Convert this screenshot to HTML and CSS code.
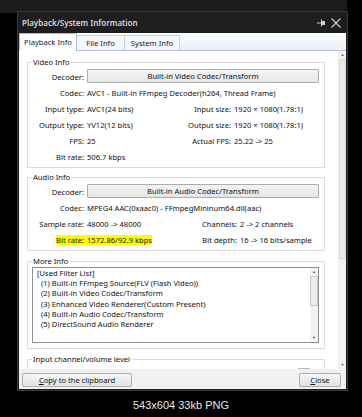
FILE: index.html
```html
<!DOCTYPE html>
<html>
<head>
<meta charset="utf-8">
<link rel="stylesheet" href="styles.css">
</head>
<body>
<div class="screen">
  <div class="window">
    <div class="titlebar">
      <span class="title">Playback/System Information</span>
      <svg class="pin" width="10" height="8" viewBox="0 0 10 8"><path d="M0 4H4" stroke="#cfcfcf" stroke-width="1"/><rect x="4" y="2" width="4" height="4" fill="#cfcfcf"/><path d="M4.5 0.5V7.5" stroke="#cfcfcf" stroke-width="1"/></svg>
      <svg class="close" width="10" height="10" viewBox="0 0 10 10"><path d="M0.5 0.5L9.5 9.5M9.5 0.5L0.5 9.5" stroke="#d0d0d0" stroke-width="1.1"/></svg>
    </div>
    <div class="client">
      <div class="tabs">
        <div class="tab active">Playback Info</div>
        <div class="tab t-file">File Info</div>
        <div class="tab t-sys">System Info</div>
      </div>
      <div class="panel">
        <div class="scroll">
          <fieldset class="group g-video">
            <legend>Video Info</legend>
            <div class="grid">
              <div class="lbl">Decoder:</div>
              <div class="span"><div class="dbtn">Built-in Video Codec/Transform</div></div>
              <div class="lbl">Codec:</div>
              <div class="span">AVC1 - Built-in FFmpeg Decoder(h264, Thread Frame)</div>
              <div class="lbl">Input type:</div>
              <div>AVC1(24 bits)</div>
              <div class="lbl">Input size:</div>
              <div>1920 × 1080(1.78:1)</div>
              <div class="lbl">Output type:</div>
              <div>YV12(12 bits)</div>
              <div class="lbl">Output size:</div>
              <div>1920 × 1080(1.78:1)</div>
              <div class="lbl">FPS:</div>
              <div>25</div>
              <div class="lbl">Actual FPS:</div>
              <div>25.22 -&gt; 25</div>
              <div class="lbl">Bit rate:</div>
              <div>506.7 kbps</div>
            </div>
          </fieldset>
          <fieldset class="group g-audio">
            <legend>Audio Info</legend>
            <div class="grid audio">
              <div class="lbl">Decoder:</div>
              <div class="span"><div class="dbtn">Built-in Audio Codec/Transform</div></div>
              <div class="lbl">Codec:</div>
              <div class="span">MPEG4 AAC(0xaac0) - FFmpegMininum64.dll(aac)</div>
              <div class="lbl">Sample rate:</div>
              <div>48000 -&gt; 48000</div>
              <div class="lbl">Channels:</div>
              <div>2 -&gt; 2 channels</div>
              <div class="lbl"><span class="hl hl-l">Bit rate:</span></div>
              <div><span class="hl">1572.86/92.9 kbps</span></div>
              <div class="lbl">Bit depth:</div>
              <div>16 -&gt; 16 bits/sample</div>
            </div>
          </fieldset>
          <fieldset class="group g-more">
            <legend>More Info</legend>
            <div class="listbox">
              <div class="lines">
                <div>[Used Filter List]</div>
                <div class="item">(1) Built-in FFmpeg Source(FLV (Flash Video))</div>
                <div class="item">(2) Built-in Video Codec/Transform</div>
                <div class="item">(3) Enhanced Video Renderer(Custom Present)</div>
                <div class="item">(4) Built-in Audio Codec/Transform</div>
                <div class="item">(5) DirectSound Audio Renderer</div>
              </div>
              <div class="sbar small">
                <div class="arrow">▲</div>
                <div class="track"><div class="thumb"></div></div>
                <div class="arrow">▼</div>
              </div>
            </div>
          </fieldset>
          <fieldset class="group g-input">
            <legend>Input channel/volume level</legend>
            <div class="level"></div>
          </fieldset>
        </div>
        <div class="sbar big">
          <div class="arrow">▲</div>
          <div class="track"><div class="thumb"></div></div>
          <div class="arrow">▼</div>
        </div>
      </div>
      <div class="footer">
        <div class="btn b-copy"><u>C</u>opy to the clipboard</div>
        <div class="btn b-close"><u>C</u>lose</div>
      </div>
    </div>
  </div>
  <div class="caption">543x604 33kb PNG</div>
</div>
</body>
</html>
```
FILE: styles.css
```css
* { box-sizing: border-box; }
html, body { margin: 0; padding: 0; }
body {
  background: #000;
  width: 362px;
  height: 417px;
  overflow: hidden;
  font-family: "Noto Sans", "Open Sans", sans-serif;
}
.screen {
  padding-top: 11px;
  height: 417px;
  background: linear-gradient(#1b1b1b, #1b1b1b) no-repeat 0 0 / 347px 13px, #000;
}
.window {
  margin-left: 17px;
  width: 331px;
  height: 380px;
  border: 1px solid #3a3a3a;
  background: #1e1e1e;
  display: flex;
  flex-direction: column;
}
.titlebar {
  height: 21px;
  display: flex;
  align-items: center;
  padding: 0 6px 0 4px;
  color: #d6d6d6;
}
.title {
  font-size: 8px;
  font-weight: 600;
  flex: 1;
}
.pin { margin-right: 4px; }
.client {
  margin: 0 1px 1px 1px;
  height: 356px;
  display: flex;
  flex-direction: column;
  background: #f0f0f0;
  font-size: 7.6px;
  color: #111;
}
.tabs {
  height: 17px;
  display: flex;
  align-items: flex-end;
  background: linear-gradient(#ffffff, #e8eef7);
}
.tab {
  height: 15px;
  line-height: 14px;
  text-align: center;
  background: #f4f7fb;
  border: 1px solid #c4cedb;
  border-bottom: none;
  border-left: none;
  color: #222;
}
.tab.active {
  width: 58px;
  height: 18px;
  line-height: 16px;
  margin-bottom: -1px;
  background: #fff;
  border: 1px solid #aebacb;
  border-bottom: none;
  position: relative;
  z-index: 1;
}
.t-file { width: 48px; }
.t-sys { width: 55px; }
.panel {
  height: 319px;
  border-top: 1px solid #b6c2d2;
  background: #fff;
  display: flex;
}
.scroll {
  flex: 1;
  overflow: hidden;
  padding-top: 6px;
}
.group {
  margin: 0 0 0 8px;
  width: 298px;
  border: 1px solid #dcdcdc;
  padding: 1px 5px 2px 4px;
  min-width: 0;
}
.group legend {
  padding: 0 1px;
  line-height: 11px;
  height: 11px;
}
.g-audio { margin-top: 4px; }
.g-more { margin-top: 5px; padding-top: 0; padding-bottom: 5px; }
.g-input { margin-top: 5px; height: 40px; }
.grid {
  display: grid;
  grid-template-columns: 52px 83px 58px 1fr;
  column-gap: 3px;
  grid-auto-rows: 16px;
  align-items: center;
  white-space: nowrap;
}
.grid.audio {
  grid-template-columns: 52px 89px 58px 1fr;
}
.grid .span { grid-column: 2 / -1; }
.lbl { text-align: right; }
.dbtn {
  height: 14px;
  line-height: 12px;
  text-align: center;
  border: 1px solid #adadad;
  border-radius: 1px;
  background: linear-gradient(#f4f4f4, #e6e6e6);
  align-self: start;
}
.grid > .span:nth-child(2) { align-self: start; }
.hl { background: #ffff00; }
.hl-l { padding-right: 3px; margin-right: -3px; }
.listbox {
  height: 76px;
  border: 1px solid #8b9099;
  display: flex;
  background: #fff;
}
.lines {
  flex: 1;
  padding-left: 4px;
  line-height: 10.2px;
  white-space: nowrap;
  overflow: hidden;
}
.item { padding-left: 4px; }
.sbar {
  display: flex;
  flex-direction: column;
  width: 8px;
  background: #f2f2f2;
}
.sbar .arrow {
  height: 8px;
  font-size: 4px;
  line-height: 8px;
  text-align: center;
  color: #606060;
}
.sbar .track { flex: 1; }
.sbar.small .thumb {
  margin: 0 0;
  height: 30px;
  border: 1px solid #c8c8c8;
  background: #ececec;
}
.sbar.big { border-left: 1px solid #f0f0f0; }
.sbar.big .thumb {
  height: 200px;
  background: #e8e8e8;
  border: 1px solid #dadada;
}
.level {
  margin-top: 2px;
  margin-left: 266px;
  width: 12px;
  height: 1px;
  background: #bbb;
}
.footer {
  height: 20px;
  display: flex;
  justify-content: space-between;
  padding: 4px 5px 0 3px;
  background: #f0f0f0;
}
.btn {
  height: 14px;
  line-height: 12px;
  text-align: center;
  border: 1px solid #acacac;
  border-radius: 2px;
  background: linear-gradient(#f6f6f6, #e2e2e2);
  color: #111;
}
.b-copy { width: 110px; }
.b-close { width: 42px; }
.caption {
  margin-top: 8px;
  text-align: center;
  font-family: "Liberation Sans", Arial, sans-serif;
  font-size: 11px;
  line-height: 13px;
  color: #e6e6e6;
}
```
